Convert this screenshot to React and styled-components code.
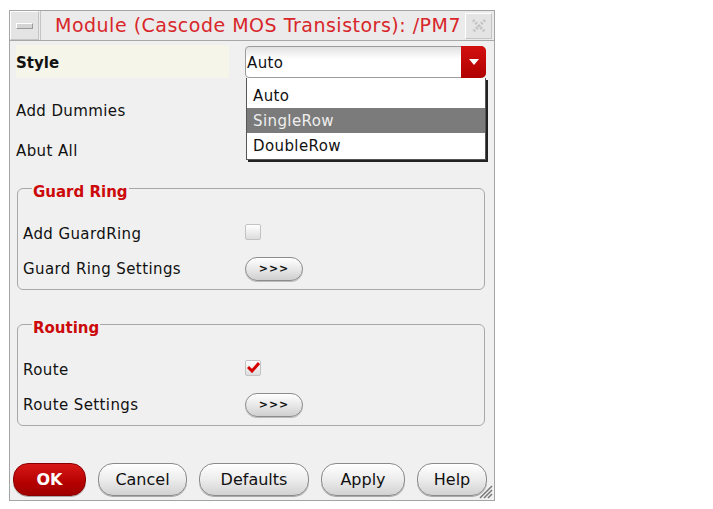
import React from 'react';
import styled, { createGlobalStyle } from 'styled-components';

const Global = createGlobalStyle`
    html, body {
        margin: 0;
        background: #ffffff;
    }
    body {
        font-family: "DejaVu Sans", "Liberation Sans", sans-serif;
        font-size: 15px;
        letter-spacing: 0.4px;
        color: #111;
    }
`

const Window = styled.div`
    margin: 10px 0 0 9px;
    width: 484px;
    height: 489px;
    border: 1px solid #a4a4a4;
    background: #f0f0f0;
    display: flex;
    flex-direction: column;
    position: relative;
`

const TitleBar = styled.div`
    height: 29px;
    display: flex;
    align-items: stretch;
    border-bottom: 1px solid #a8a8a8;
    background: #ebebeb;
`

const TitleButton = styled.div`
    width: ${p => p.w}px;
    margin: ${p => p.m};
    border: 1px solid #c4c4c4;
    border-top-color: #fff;
    border-left-color: #fff;
    background: #e4e4e4;
    display: flex;
    align-items: center;
    justify-content: center;
    box-sizing: border-box;
`

const MinBar = styled.div`
    width: 15px;
    height: 4px;
    border: 1px solid #9a9a9a;
    border-top-color: #fff;
    border-left-color: #fff;
    background: #d4d4d4;
`

const Title = styled.div`
    flex: 1;
    overflow: hidden;
    white-space: nowrap;
    color: #d8262a;
    font-size: 19px;
    letter-spacing: 0.5px;
    line-height: 29px;
    padding-left: 14px;
    border-left: 1px solid #c4c4c4;
`

const Body = styled.div`
    flex: 1;
    display: flex;
    flex-direction: column;
    padding: 0 6px 0 6px;
`

const Row = styled.div`
    display: flex;
    align-items: center;
    height: ${p => p.h || 36}px;
    margin-top: ${p => p.mt || 0}px;
`

const Label = styled.div`
    width: ${p => p.w || 228}px;
    flex-shrink: 0;
    align-self: stretch;
    display: flex;
    align-items: center;
    box-sizing: border-box;
`

const StyleLabel = styled(Label)`
    background: #f5f5e9;
    font-weight: bold;
    letter-spacing: 0;
    width: 213px;
    margin-right: 16px;
    padding-top: 3px;
`

const Combo = styled.div`
    position: relative;
    width: 241px;
    height: 32px;
    box-sizing: border-box;
    border: 1px solid #9c9c9c;
    border-radius: 4px 5px 5px 4px;
    background: linear-gradient(#e2e2e2, #ffffff 40%, #ffffff);
    display: flex;
    align-items: center;
`

const ComboText = styled.div`
    flex: 1;
    padding: 2px 0 0 1px;
`

const ComboArrow = styled.div`
    width: 25px;
    align-self: stretch;
    margin: -1px -1px -1px 0;
    border-radius: 0 5px 5px 0;
    background: linear-gradient(#d31010, #b00000);
    display: flex;
    align-items: center;
    justify-content: center;
    &::after {
        content: "";
        border-left: 5px solid transparent;
        border-right: 5px solid transparent;
        border-top: 6px solid #fff;
    }
`

const Menu = styled.div`
    position: absolute;
    left: 0;
    top: 31px;
    width: 238px;
    background: #fff;
    border: 1px solid #555;
    border-top: none;
    box-shadow: 2px 2px 0 #222;
    z-index: 5;
    padding: 5px 0 1px 0;
`

const MenuItem = styled.div`
    height: 25px;
    line-height: 26px;
    padding-left: 6px;
    color: ${p => p.active ? '#eeeeee' : '#111'};
    background: ${p => p.active ? '#7b7b7b' : 'transparent'};
`

const Group = styled.div`
    margin: ${p => p.mt}px 0 0 1px;
    width: 468px;
    height: 102px;
    box-sizing: border-box;
    border: 1px solid #a8a8a8;
    border-radius: 6px;
    padding: 27px 0 0 5px;
    position: relative;
`

const Legend = styled.div`
    position: absolute;
    top: -6px;
    left: 14px;
    color: #cc0a0a;
    font-weight: bold;
    letter-spacing: 0;
    padding: 0 1px;
    line-height: 18px;
    background: #f0f0f0;
`

const GroupRow = styled.div`
    display: flex;
    align-items: center;
    height: 35px;
`

const Check = styled.div`
    width: 16px;
    height: 16px;
    box-sizing: border-box;
    border: 1px solid #c2c2c2;
    border-radius: 2px;
    background: linear-gradient(#ffffff, #dcdcdc);
    display: flex;
    align-items: center;
    justify-content: center;
    margin-top: -4px;
`

const MoreButton = styled.button`
    width: 58px;
    height: 24px;
    border-radius: 12px;
    border: 1px solid #8c8c8c;
    background: linear-gradient(#ffffff, #e6e6e6 55%, #cfcfcf);
    font-family: "DejaVu Sans", sans-serif;
    font-size: 11px;
    font-weight: bold;
    letter-spacing: 1px;
    color: #111;
    padding: 0;
    box-shadow: 0 1px 0 #bbb;
`

const Footer = styled.div`
    margin-top: auto;
    display: flex;
    gap: 12px;
    padding: 0 0 4px 3px;
    margin-left: -6px;
`

const Btn = styled.button`
    width: ${p => p.w}px;
    height: 33px;
    border-radius: 15px;
    border: 1px solid ${p => p.primary ? '#8a0000' : '#8a8a8a'};
    background: ${p => p.primary
        ? 'linear-gradient(#d81818, #b50000 60%, #a00000)'
        : 'linear-gradient(#ffffff, #ececec 50%, #d2d2d2)'};
    color: ${p => p.primary ? '#fff' : '#111'};
    font-family: "DejaVu Sans", sans-serif;
    font-size: 16px;
    font-weight: ${p => p.primary ? 'bold' : 'normal'};
    padding: 0;
    box-shadow: 0 1px 0 #aaa;
`

const Grip = styled.svg`
    position: absolute;
    right: 1px;
    bottom: 1px;
`

const Checkmark = () => (
    <svg width="13" height="11" viewBox="0 0 13 11">
        <path d="M1 5 L5 9 L12 1" fill="none" stroke="#d40000" strokeWidth="3" />
    </svg>
)

export default function App() {
    return (
        <>
            <Global />
            <Window>
                <TitleBar>
                    <TitleButton w={29} m="0 1px 0 0"><MinBar /></TitleButton>
                    <Title>Module (Cascode MOS Transistors): /PM7</Title>
                    <TitleButton w={27} m="2px 2px 1px 2px">
                        <svg width="18" height="18" viewBox="0 0 18 18">
                            <path d="M3 3 L15 15 M15 3 L3 15" stroke="#c4c4c4" strokeWidth="3" strokeDasharray="2 1.5" fill="none" />
                        </svg>
                    </TitleButton>
                </TitleBar>
                <Body>
                    <Row h={33} mt={4}>
                        <StyleLabel>Style</StyleLabel>
                        <Combo>
                            <ComboText>Auto</ComboText>
                            <ComboArrow />
                            <Menu>
                                <MenuItem>Auto</MenuItem>
                                <MenuItem active>SingleRow</MenuItem>
                                <MenuItem>DoubleRow</MenuItem>
                            </Menu>
                        </Combo>
                    </Row>
                    <Row mt={15}><Label>Add Dummies</Label></Row>
                    <Row mt={4}><Label>Abut All</Label></Row>
                    <Group mt={19}>
                        <Legend>Guard Ring</Legend>
                        <GroupRow>
                            <Label w={222}>Add GuardRing</Label>
                            <Check />
                        </GroupRow>
                        <GroupRow>
                            <Label w={222}>Guard Ring Settings</Label>
                            <MoreButton>&gt;&gt;&gt;</MoreButton>
                        </GroupRow>
                    </Group>
                    <Group mt={34}>
                        <Legend>Routing</Legend>
                        <GroupRow>
                            <Label w={222}>Route</Label>
                            <Check><Checkmark /></Check>
                        </GroupRow>
                        <GroupRow>
                            <Label w={222}>Route Settings</Label>
                            <MoreButton>&gt;&gt;&gt;</MoreButton>
                        </GroupRow>
                    </Group>
                    <Footer>
                        <Btn primary w={73}>OK</Btn>
                        <Btn w={89}>Cancel</Btn>
                        <Btn w={110}>Defaults</Btn>
                        <Btn w={84}>Apply</Btn>
                        <Btn w={70}>Help</Btn>
                    </Footer>
                </Body>
                <Grip width="16" height="16" viewBox="0 0 16 16">
                    <path d="M15 3 L3 15 M15 7 L7 15 M15 11 L11 15" stroke="#777" strokeWidth="1.5" />
                </Grip>
            </Window>
        </>
    );
}
